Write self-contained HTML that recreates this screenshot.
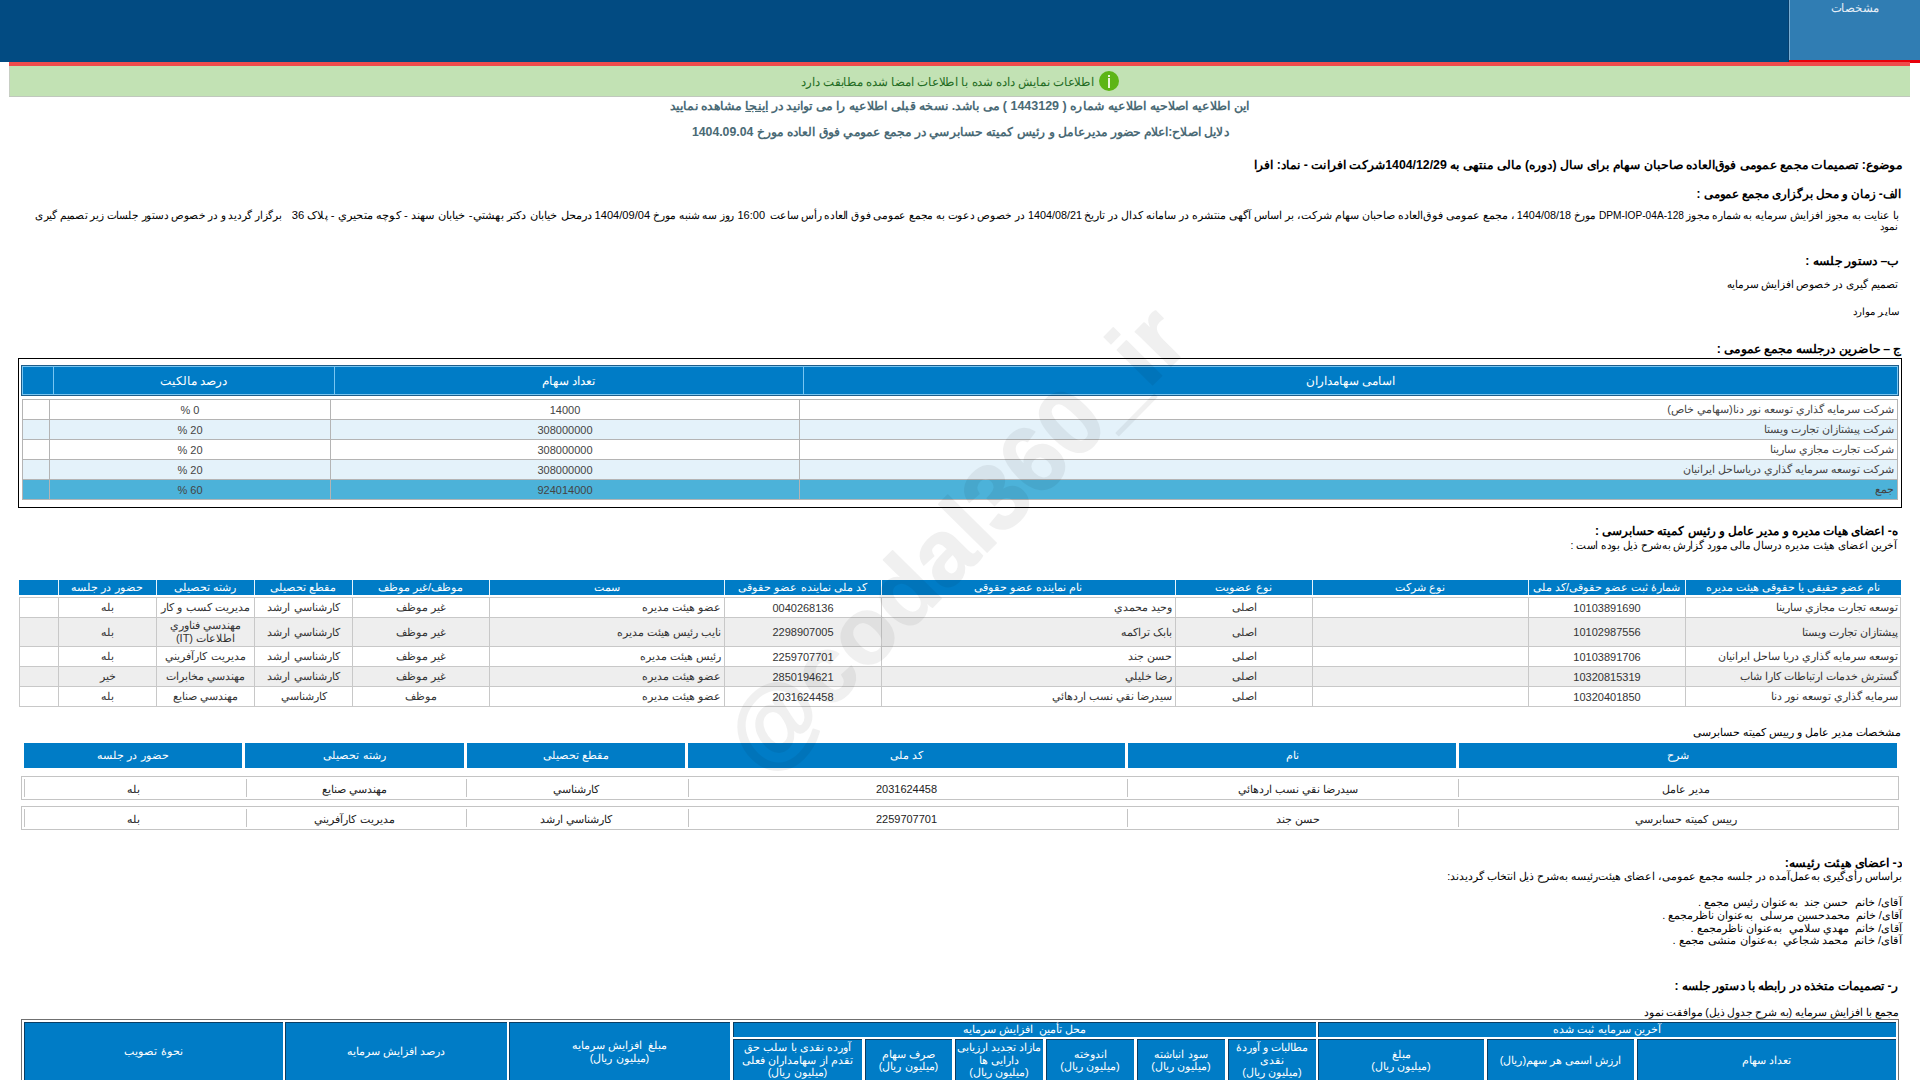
<!DOCTYPE html>
<html lang="fa" dir="rtl"><head><meta charset="utf-8"><title>codal</title>
<style>
html,body{margin:0;padding:0;background:#fff;width:1920px;height:1080px;overflow:hidden;}
body{position:relative;font-family:"Liberation Sans",sans-serif;}
body>div,body>svg{position:absolute;}
.tx{white-space:nowrap;direction:rtl;}
.mk{display:inline-block;width:0;height:0;}
.cell{display:flex;align-items:center;box-sizing:border-box;direction:rtl;white-space:nowrap;}
</style></head><body>
<div style="left:0px;top:0px;width:1920px;height:62px;background:#024b82;"></div>
<div style="left:1789px;top:0px;width:131px;height:60px;background:#307db3;"></div>
<div style="left:1788px;top:0px;width:1px;height:62px;background:#083f6c;"></div>
<div style="left:1789px;top:0px;width:1px;height:60px;background:#7aaed4;"></div>
<div style="left:1789px;top:60px;width:131px;height:3px;background:#e8000a;"></div>
<div style="left:9px;top:62px;width:1901px;height:4px;background:#ef4c4c;"></div>
<div style="left:9px;top:66px;width:1901px;height:30px;background:#c2e2b4;"></div>
<div style="left:9px;top:96px;width:1901px;height:1px;background:#c0c8bd;"></div>
<div style="left:9px;top:66px;width:1px;height:30px;background:#c8cfc4;"></div>
<div style="left:1099px;top:71px;width:20px;height:20px;border-radius:50%;background:#5db515;"></div>
<div style="left:1108px;top:75px;width:2px;height:2px;background:#e8f6d8;"></div>
<div style="left:1108px;top:78px;width:2px;height:10px;background:#e8f6d8;"></div>
<div style="left:18px;top:358px;width:1884px;height:150px;background:#000;"></div>
<div style="left:19px;top:359px;width:1882px;height:148px;background:#fff;"></div>
<div style="left:21px;top:365px;width:1878px;height:31px;background:#1f5d89;"></div>
<div style="left:22px;top:366px;width:1876px;height:29px;background:#78c6f2;"></div>
<div style="left:23px;top:367px;width:1874px;height:27px;background:#007cc6;"></div>
<div style="left:53px;top:367px;width:1px;height:27px;background:#78c6f2;"></div>
<div style="left:334px;top:367px;width:1px;height:27px;background:#78c6f2;"></div>
<div style="left:803px;top:367px;width:1px;height:27px;background:#78c6f2;"></div>
<div class="cell" style="left:803px;top:366px;width:1095px;height:29px;justify-content:center;text-align:center;color:#fff;font-size:12px;font-weight:normal;padding:0 4px;">اسامی سهامداران</div>
<div class="cell" style="left:334px;top:366px;width:469px;height:29px;justify-content:center;text-align:center;color:#fff;font-size:12px;font-weight:normal;padding:0 4px;">تعداد سهام</div>
<div class="cell" style="left:53px;top:366px;width:281px;height:29px;justify-content:center;text-align:center;color:#fff;font-size:12px;font-weight:normal;padding:0 4px;">درصد مالکیت</div>
<div style="left:22px;top:399px;width:1876px;height:101px;background:#b4b4b4;"></div>
<div style="left:23px;top:400px;width:1874px;height:19px;background:#fff;"></div>
<div style="left:49px;top:400px;width:1px;height:19px;background:#b4b4b4;"></div>
<div style="left:330px;top:400px;width:1px;height:19px;background:#b4b4b4;"></div>
<div style="left:799px;top:400px;width:1px;height:19px;background:#b4b4b4;"></div>
<div class="cell" style="left:800px;top:400px;width:1097px;height:19px;justify-content:flex-start;text-align:right;color:#444;font-size:11px;font-weight:normal;padding:0 3px;">شرکت سرمايه گذاري توسعه نور دنا(سهامي خاص)</div>
<div class="cell" style="left:331px;top:400px;width:468px;height:19px;justify-content:center;text-align:center;color:#444;font-size:11px;font-weight:normal;padding:0 4px;">14000</div>
<div class="cell" style="left:50px;top:400px;width:280px;height:19px;justify-content:center;text-align:center;color:#444;font-size:11px;font-weight:normal;padding:0 4px;">0 %</div>
<div style="left:23px;top:420px;width:1874px;height:19px;background:#e4f2fa;"></div>
<div style="left:49px;top:420px;width:1px;height:19px;background:#b4b4b4;"></div>
<div style="left:330px;top:420px;width:1px;height:19px;background:#b4b4b4;"></div>
<div style="left:799px;top:420px;width:1px;height:19px;background:#b4b4b4;"></div>
<div class="cell" style="left:800px;top:420px;width:1097px;height:19px;justify-content:flex-start;text-align:right;color:#444;font-size:11px;font-weight:normal;padding:0 3px;">شرکت پيشتازان تجارت ويستا</div>
<div class="cell" style="left:331px;top:420px;width:468px;height:19px;justify-content:center;text-align:center;color:#444;font-size:11px;font-weight:normal;padding:0 4px;">308000000</div>
<div class="cell" style="left:50px;top:420px;width:280px;height:19px;justify-content:center;text-align:center;color:#444;font-size:11px;font-weight:normal;padding:0 4px;">20 %</div>
<div style="left:23px;top:440px;width:1874px;height:19px;background:#fff;"></div>
<div style="left:49px;top:440px;width:1px;height:19px;background:#b4b4b4;"></div>
<div style="left:330px;top:440px;width:1px;height:19px;background:#b4b4b4;"></div>
<div style="left:799px;top:440px;width:1px;height:19px;background:#b4b4b4;"></div>
<div class="cell" style="left:800px;top:440px;width:1097px;height:19px;justify-content:flex-start;text-align:right;color:#444;font-size:11px;font-weight:normal;padding:0 3px;">شرکت تجارت مجازي سارينا</div>
<div class="cell" style="left:331px;top:440px;width:468px;height:19px;justify-content:center;text-align:center;color:#444;font-size:11px;font-weight:normal;padding:0 4px;">308000000</div>
<div class="cell" style="left:50px;top:440px;width:280px;height:19px;justify-content:center;text-align:center;color:#444;font-size:11px;font-weight:normal;padding:0 4px;">20 %</div>
<div style="left:23px;top:460px;width:1874px;height:19px;background:#e4f2fa;"></div>
<div style="left:49px;top:460px;width:1px;height:19px;background:#b4b4b4;"></div>
<div style="left:330px;top:460px;width:1px;height:19px;background:#b4b4b4;"></div>
<div style="left:799px;top:460px;width:1px;height:19px;background:#b4b4b4;"></div>
<div class="cell" style="left:800px;top:460px;width:1097px;height:19px;justify-content:flex-start;text-align:right;color:#444;font-size:11px;font-weight:normal;padding:0 3px;">شرکت توسعه سرمايه گذاري درياساحل ايرانيان</div>
<div class="cell" style="left:331px;top:460px;width:468px;height:19px;justify-content:center;text-align:center;color:#444;font-size:11px;font-weight:normal;padding:0 4px;">308000000</div>
<div class="cell" style="left:50px;top:460px;width:280px;height:19px;justify-content:center;text-align:center;color:#444;font-size:11px;font-weight:normal;padding:0 4px;">20 %</div>
<div style="left:23px;top:480px;width:1874px;height:19px;background:#4cb2d9;"></div>
<div style="left:49px;top:480px;width:1px;height:19px;background:#b4b4b4;"></div>
<div style="left:330px;top:480px;width:1px;height:19px;background:#b4b4b4;"></div>
<div style="left:799px;top:480px;width:1px;height:19px;background:#b4b4b4;"></div>
<div class="cell" style="left:800px;top:480px;width:1097px;height:19px;justify-content:flex-start;text-align:right;color:#444;font-size:11px;font-weight:normal;padding:0 3px;">جمع</div>
<div class="cell" style="left:331px;top:480px;width:468px;height:19px;justify-content:center;text-align:center;color:#444;font-size:11px;font-weight:normal;padding:0 4px;">924014000</div>
<div class="cell" style="left:50px;top:480px;width:280px;height:19px;justify-content:center;text-align:center;color:#444;font-size:11px;font-weight:normal;padding:0 4px;">60 %</div>
<div style="left:19px;top:580px;width:1882px;height:15px;background:#007cc6;"></div>
<div style="left:58px;top:580px;width:1px;height:15px;background:#e8f4fb;"></div>
<div style="left:156px;top:580px;width:1px;height:15px;background:#e8f4fb;"></div>
<div style="left:254px;top:580px;width:1px;height:15px;background:#e8f4fb;"></div>
<div style="left:352px;top:580px;width:1px;height:15px;background:#e8f4fb;"></div>
<div style="left:489px;top:580px;width:1px;height:15px;background:#e8f4fb;"></div>
<div style="left:724px;top:580px;width:1px;height:15px;background:#e8f4fb;"></div>
<div style="left:881px;top:580px;width:1px;height:15px;background:#e8f4fb;"></div>
<div style="left:1175px;top:580px;width:1px;height:15px;background:#e8f4fb;"></div>
<div style="left:1312px;top:580px;width:1px;height:15px;background:#e8f4fb;"></div>
<div style="left:1528px;top:580px;width:1px;height:15px;background:#e8f4fb;"></div>
<div style="left:1685px;top:580px;width:1px;height:15px;background:#e8f4fb;"></div>
<div class="cell" style="left:58px;top:580px;width:98px;height:15px;justify-content:center;text-align:center;color:#fff;font-size:11px;font-weight:normal;line-height:15px;padding:0 4px;">حضور در جلسه</div>
<div class="cell" style="left:156px;top:580px;width:98px;height:15px;justify-content:center;text-align:center;color:#fff;font-size:11px;font-weight:normal;line-height:15px;padding:0 4px;">رشته تحصیلی</div>
<div class="cell" style="left:254px;top:580px;width:98px;height:15px;justify-content:center;text-align:center;color:#fff;font-size:11px;font-weight:normal;line-height:15px;padding:0 4px;">مقطع تحصیلی</div>
<div class="cell" style="left:352px;top:580px;width:137px;height:15px;justify-content:center;text-align:center;color:#fff;font-size:11px;font-weight:normal;line-height:15px;padding:0 4px;">موظف/غیر موظف</div>
<div class="cell" style="left:489px;top:580px;width:235px;height:15px;justify-content:center;text-align:center;color:#fff;font-size:11px;font-weight:normal;line-height:15px;padding:0 4px;">سمت</div>
<div class="cell" style="left:724px;top:580px;width:157px;height:15px;justify-content:center;text-align:center;color:#fff;font-size:11px;font-weight:normal;line-height:15px;padding:0 4px;">کد ملی نماینده عضو حقوقی</div>
<div class="cell" style="left:881px;top:580px;width:294px;height:15px;justify-content:center;text-align:center;color:#fff;font-size:11px;font-weight:normal;line-height:15px;padding:0 4px;">نام نماینده عضو حقوقی</div>
<div class="cell" style="left:1175px;top:580px;width:137px;height:15px;justify-content:center;text-align:center;color:#fff;font-size:11px;font-weight:normal;line-height:15px;padding:0 4px;">نوع عضویت</div>
<div class="cell" style="left:1312px;top:580px;width:216px;height:15px;justify-content:center;text-align:center;color:#fff;font-size:11px;font-weight:normal;line-height:15px;padding:0 4px;">نوع شرکت</div>
<div class="cell" style="left:1528px;top:580px;width:157px;height:15px;justify-content:center;text-align:center;color:#fff;font-size:11px;font-weight:normal;line-height:15px;padding:0 4px;">شمارهٔ ثبت عضو حقوقی/کد ملی</div>
<div class="cell" style="left:1685px;top:580px;width:216px;height:15px;justify-content:center;text-align:center;color:#fff;font-size:11px;font-weight:normal;line-height:15px;padding:0 4px;">نام عضو حقیقی یا حقوقی هیئت مدیره</div>
<div style="left:19px;top:597px;width:1882px;height:110px;background:#c8c8c8;"></div>
<div style="left:20px;top:598px;width:1880px;height:19px;background:#fff;"></div>
<div style="left:58px;top:597px;width:1px;height:20px;background:#c8c8c8;"></div>
<div style="left:156px;top:597px;width:1px;height:20px;background:#c8c8c8;"></div>
<div style="left:254px;top:597px;width:1px;height:20px;background:#c8c8c8;"></div>
<div style="left:352px;top:597px;width:1px;height:20px;background:#c8c8c8;"></div>
<div style="left:489px;top:597px;width:1px;height:20px;background:#c8c8c8;"></div>
<div style="left:724px;top:597px;width:1px;height:20px;background:#c8c8c8;"></div>
<div style="left:881px;top:597px;width:1px;height:20px;background:#c8c8c8;"></div>
<div style="left:1175px;top:597px;width:1px;height:20px;background:#c8c8c8;"></div>
<div style="left:1312px;top:597px;width:1px;height:20px;background:#c8c8c8;"></div>
<div style="left:1528px;top:597px;width:1px;height:20px;background:#c8c8c8;"></div>
<div style="left:1685px;top:597px;width:1px;height:20px;background:#c8c8c8;"></div>
<div class="cell" style="left:59px;top:598px;width:97px;height:19px;justify-content:center;text-align:center;color:#333;font-size:11px;font-weight:normal;padding:0 3px;">بله</div>
<div class="cell" style="left:157px;top:598px;width:97px;height:19px;justify-content:center;text-align:center;color:#333;font-size:11px;font-weight:normal;padding:0 3px;">مديريت کسب و کار</div>
<div class="cell" style="left:255px;top:598px;width:97px;height:19px;justify-content:center;text-align:center;color:#333;font-size:11px;font-weight:normal;padding:0 3px;">کارشناسي ارشد</div>
<div class="cell" style="left:353px;top:598px;width:136px;height:19px;justify-content:center;text-align:center;color:#333;font-size:11px;font-weight:normal;padding:0 3px;">غير موظف</div>
<div class="cell" style="left:490px;top:598px;width:234px;height:19px;justify-content:flex-start;text-align:right;color:#333;font-size:11px;font-weight:normal;padding:0 3px;">عضو هيئت مديره</div>
<div class="cell" style="left:725px;top:598px;width:156px;height:19px;justify-content:center;text-align:center;color:#333;font-size:11px;font-weight:normal;padding:0 3px;">0040268136</div>
<div class="cell" style="left:882px;top:598px;width:293px;height:19px;justify-content:flex-start;text-align:right;color:#333;font-size:11px;font-weight:normal;padding:0 3px;">وحيد محمدي</div>
<div class="cell" style="left:1176px;top:598px;width:136px;height:19px;justify-content:center;text-align:center;color:#333;font-size:11px;font-weight:normal;padding:0 3px;">اصلی</div>
<div class="cell" style="left:1529px;top:598px;width:156px;height:19px;justify-content:center;text-align:center;color:#333;font-size:11px;font-weight:normal;padding:0 3px;">10103891690</div>
<div class="cell" style="left:1686px;top:598px;width:215px;height:19px;justify-content:flex-start;text-align:right;color:#333;font-size:11px;font-weight:normal;padding:0 3px;">توسعه تجارت مجازي سارينا</div>
<div style="left:20px;top:618px;width:1880px;height:28px;background:#eeeeee;"></div>
<div style="left:58px;top:617px;width:1px;height:29px;background:#c8c8c8;"></div>
<div style="left:156px;top:617px;width:1px;height:29px;background:#c8c8c8;"></div>
<div style="left:254px;top:617px;width:1px;height:29px;background:#c8c8c8;"></div>
<div style="left:352px;top:617px;width:1px;height:29px;background:#c8c8c8;"></div>
<div style="left:489px;top:617px;width:1px;height:29px;background:#c8c8c8;"></div>
<div style="left:724px;top:617px;width:1px;height:29px;background:#c8c8c8;"></div>
<div style="left:881px;top:617px;width:1px;height:29px;background:#c8c8c8;"></div>
<div style="left:1175px;top:617px;width:1px;height:29px;background:#c8c8c8;"></div>
<div style="left:1312px;top:617px;width:1px;height:29px;background:#c8c8c8;"></div>
<div style="left:1528px;top:617px;width:1px;height:29px;background:#c8c8c8;"></div>
<div style="left:1685px;top:617px;width:1px;height:29px;background:#c8c8c8;"></div>
<div class="cell" style="left:59px;top:618px;width:97px;height:28px;justify-content:center;text-align:center;color:#333;font-size:11px;font-weight:normal;padding:0 3px;">بله</div>
<div class="cell" style="left:157px;top:618px;width:97px;height:28px;justify-content:center;text-align:center;color:#333;font-size:11px;font-weight:normal;line-height:13px;padding:0 3px;">مهندسي فناوري<br>اطلاعات (IT)</div>
<div class="cell" style="left:255px;top:618px;width:97px;height:28px;justify-content:center;text-align:center;color:#333;font-size:11px;font-weight:normal;padding:0 3px;">کارشناسي ارشد</div>
<div class="cell" style="left:353px;top:618px;width:136px;height:28px;justify-content:center;text-align:center;color:#333;font-size:11px;font-weight:normal;padding:0 3px;">غير موظف</div>
<div class="cell" style="left:490px;top:618px;width:234px;height:28px;justify-content:flex-start;text-align:right;color:#333;font-size:11px;font-weight:normal;padding:0 3px;">نايب رئيس هيئت مديره</div>
<div class="cell" style="left:725px;top:618px;width:156px;height:28px;justify-content:center;text-align:center;color:#333;font-size:11px;font-weight:normal;padding:0 3px;">2298907005</div>
<div class="cell" style="left:882px;top:618px;width:293px;height:28px;justify-content:flex-start;text-align:right;color:#333;font-size:11px;font-weight:normal;padding:0 3px;">بابک تراکمه</div>
<div class="cell" style="left:1176px;top:618px;width:136px;height:28px;justify-content:center;text-align:center;color:#333;font-size:11px;font-weight:normal;padding:0 3px;">اصلی</div>
<div class="cell" style="left:1529px;top:618px;width:156px;height:28px;justify-content:center;text-align:center;color:#333;font-size:11px;font-weight:normal;padding:0 3px;">10102987556</div>
<div class="cell" style="left:1686px;top:618px;width:215px;height:28px;justify-content:flex-start;text-align:right;color:#333;font-size:11px;font-weight:normal;padding:0 3px;">پيشتازان تجارت ويستا</div>
<div style="left:20px;top:647px;width:1880px;height:19px;background:#fff;"></div>
<div style="left:58px;top:646px;width:1px;height:20px;background:#c8c8c8;"></div>
<div style="left:156px;top:646px;width:1px;height:20px;background:#c8c8c8;"></div>
<div style="left:254px;top:646px;width:1px;height:20px;background:#c8c8c8;"></div>
<div style="left:352px;top:646px;width:1px;height:20px;background:#c8c8c8;"></div>
<div style="left:489px;top:646px;width:1px;height:20px;background:#c8c8c8;"></div>
<div style="left:724px;top:646px;width:1px;height:20px;background:#c8c8c8;"></div>
<div style="left:881px;top:646px;width:1px;height:20px;background:#c8c8c8;"></div>
<div style="left:1175px;top:646px;width:1px;height:20px;background:#c8c8c8;"></div>
<div style="left:1312px;top:646px;width:1px;height:20px;background:#c8c8c8;"></div>
<div style="left:1528px;top:646px;width:1px;height:20px;background:#c8c8c8;"></div>
<div style="left:1685px;top:646px;width:1px;height:20px;background:#c8c8c8;"></div>
<div class="cell" style="left:59px;top:647px;width:97px;height:19px;justify-content:center;text-align:center;color:#333;font-size:11px;font-weight:normal;padding:0 3px;">بله</div>
<div class="cell" style="left:157px;top:647px;width:97px;height:19px;justify-content:center;text-align:center;color:#333;font-size:11px;font-weight:normal;padding:0 3px;">مديريت کارآفريني</div>
<div class="cell" style="left:255px;top:647px;width:97px;height:19px;justify-content:center;text-align:center;color:#333;font-size:11px;font-weight:normal;padding:0 3px;">کارشناسي ارشد</div>
<div class="cell" style="left:353px;top:647px;width:136px;height:19px;justify-content:center;text-align:center;color:#333;font-size:11px;font-weight:normal;padding:0 3px;">غير موظف</div>
<div class="cell" style="left:490px;top:647px;width:234px;height:19px;justify-content:flex-start;text-align:right;color:#333;font-size:11px;font-weight:normal;padding:0 3px;">رئيس هيئت مديره</div>
<div class="cell" style="left:725px;top:647px;width:156px;height:19px;justify-content:center;text-align:center;color:#333;font-size:11px;font-weight:normal;padding:0 3px;">2259707701</div>
<div class="cell" style="left:882px;top:647px;width:293px;height:19px;justify-content:flex-start;text-align:right;color:#333;font-size:11px;font-weight:normal;padding:0 3px;">حسن جند</div>
<div class="cell" style="left:1176px;top:647px;width:136px;height:19px;justify-content:center;text-align:center;color:#333;font-size:11px;font-weight:normal;padding:0 3px;">اصلی</div>
<div class="cell" style="left:1529px;top:647px;width:156px;height:19px;justify-content:center;text-align:center;color:#333;font-size:11px;font-weight:normal;padding:0 3px;">10103891706</div>
<div class="cell" style="left:1686px;top:647px;width:215px;height:19px;justify-content:flex-start;text-align:right;color:#333;font-size:11px;font-weight:normal;padding:0 3px;">توسعه سرمايه گذاري دريا ساحل ايرانيان</div>
<div style="left:20px;top:667px;width:1880px;height:19px;background:#eeeeee;"></div>
<div style="left:58px;top:666px;width:1px;height:20px;background:#c8c8c8;"></div>
<div style="left:156px;top:666px;width:1px;height:20px;background:#c8c8c8;"></div>
<div style="left:254px;top:666px;width:1px;height:20px;background:#c8c8c8;"></div>
<div style="left:352px;top:666px;width:1px;height:20px;background:#c8c8c8;"></div>
<div style="left:489px;top:666px;width:1px;height:20px;background:#c8c8c8;"></div>
<div style="left:724px;top:666px;width:1px;height:20px;background:#c8c8c8;"></div>
<div style="left:881px;top:666px;width:1px;height:20px;background:#c8c8c8;"></div>
<div style="left:1175px;top:666px;width:1px;height:20px;background:#c8c8c8;"></div>
<div style="left:1312px;top:666px;width:1px;height:20px;background:#c8c8c8;"></div>
<div style="left:1528px;top:666px;width:1px;height:20px;background:#c8c8c8;"></div>
<div style="left:1685px;top:666px;width:1px;height:20px;background:#c8c8c8;"></div>
<div class="cell" style="left:59px;top:667px;width:97px;height:19px;justify-content:center;text-align:center;color:#333;font-size:11px;font-weight:normal;padding:0 3px;">خير</div>
<div class="cell" style="left:157px;top:667px;width:97px;height:19px;justify-content:center;text-align:center;color:#333;font-size:11px;font-weight:normal;padding:0 3px;">مهندسي مخابرات</div>
<div class="cell" style="left:255px;top:667px;width:97px;height:19px;justify-content:center;text-align:center;color:#333;font-size:11px;font-weight:normal;padding:0 3px;">کارشناسي ارشد</div>
<div class="cell" style="left:353px;top:667px;width:136px;height:19px;justify-content:center;text-align:center;color:#333;font-size:11px;font-weight:normal;padding:0 3px;">غير موظف</div>
<div class="cell" style="left:490px;top:667px;width:234px;height:19px;justify-content:flex-start;text-align:right;color:#333;font-size:11px;font-weight:normal;padding:0 3px;">عضو هيئت مديره</div>
<div class="cell" style="left:725px;top:667px;width:156px;height:19px;justify-content:center;text-align:center;color:#333;font-size:11px;font-weight:normal;padding:0 3px;">2850194621</div>
<div class="cell" style="left:882px;top:667px;width:293px;height:19px;justify-content:flex-start;text-align:right;color:#333;font-size:11px;font-weight:normal;padding:0 3px;">رضا خليلي</div>
<div class="cell" style="left:1176px;top:667px;width:136px;height:19px;justify-content:center;text-align:center;color:#333;font-size:11px;font-weight:normal;padding:0 3px;">اصلی</div>
<div class="cell" style="left:1529px;top:667px;width:156px;height:19px;justify-content:center;text-align:center;color:#333;font-size:11px;font-weight:normal;padding:0 3px;">10320815319</div>
<div class="cell" style="left:1686px;top:667px;width:215px;height:19px;justify-content:flex-start;text-align:right;color:#333;font-size:11px;font-weight:normal;padding:0 3px;">گسترش خدمات ارتباطات کارا شاب</div>
<div style="left:20px;top:687px;width:1880px;height:19px;background:#fff;"></div>
<div style="left:58px;top:686px;width:1px;height:20px;background:#c8c8c8;"></div>
<div style="left:156px;top:686px;width:1px;height:20px;background:#c8c8c8;"></div>
<div style="left:254px;top:686px;width:1px;height:20px;background:#c8c8c8;"></div>
<div style="left:352px;top:686px;width:1px;height:20px;background:#c8c8c8;"></div>
<div style="left:489px;top:686px;width:1px;height:20px;background:#c8c8c8;"></div>
<div style="left:724px;top:686px;width:1px;height:20px;background:#c8c8c8;"></div>
<div style="left:881px;top:686px;width:1px;height:20px;background:#c8c8c8;"></div>
<div style="left:1175px;top:686px;width:1px;height:20px;background:#c8c8c8;"></div>
<div style="left:1312px;top:686px;width:1px;height:20px;background:#c8c8c8;"></div>
<div style="left:1528px;top:686px;width:1px;height:20px;background:#c8c8c8;"></div>
<div style="left:1685px;top:686px;width:1px;height:20px;background:#c8c8c8;"></div>
<div class="cell" style="left:59px;top:687px;width:97px;height:19px;justify-content:center;text-align:center;color:#333;font-size:11px;font-weight:normal;padding:0 3px;">بله</div>
<div class="cell" style="left:157px;top:687px;width:97px;height:19px;justify-content:center;text-align:center;color:#333;font-size:11px;font-weight:normal;padding:0 3px;">مهندسي صنايع</div>
<div class="cell" style="left:255px;top:687px;width:97px;height:19px;justify-content:center;text-align:center;color:#333;font-size:11px;font-weight:normal;padding:0 3px;">کارشناسي</div>
<div class="cell" style="left:353px;top:687px;width:136px;height:19px;justify-content:center;text-align:center;color:#333;font-size:11px;font-weight:normal;padding:0 3px;">موظف</div>
<div class="cell" style="left:490px;top:687px;width:234px;height:19px;justify-content:flex-start;text-align:right;color:#333;font-size:11px;font-weight:normal;padding:0 3px;">عضو هيئت مديره</div>
<div class="cell" style="left:725px;top:687px;width:156px;height:19px;justify-content:center;text-align:center;color:#333;font-size:11px;font-weight:normal;padding:0 3px;">2031624458</div>
<div class="cell" style="left:882px;top:687px;width:293px;height:19px;justify-content:flex-start;text-align:right;color:#333;font-size:11px;font-weight:normal;padding:0 3px;">سيدرضا نقي نسب اردهائي</div>
<div class="cell" style="left:1176px;top:687px;width:136px;height:19px;justify-content:center;text-align:center;color:#333;font-size:11px;font-weight:normal;padding:0 3px;">اصلی</div>
<div class="cell" style="left:1529px;top:687px;width:156px;height:19px;justify-content:center;text-align:center;color:#333;font-size:11px;font-weight:normal;padding:0 3px;">10320401850</div>
<div class="cell" style="left:1686px;top:687px;width:215px;height:19px;justify-content:flex-start;text-align:right;color:#333;font-size:11px;font-weight:normal;padding:0 3px;">سرمايه گذاري توسعه نور دنا</div>
<div style="left:24px;top:743px;width:218px;height:25px;background:#007cc6;"></div>
<div class="cell" style="left:24px;top:743px;width:218px;height:25px;justify-content:center;text-align:center;color:#fff;font-size:11px;font-weight:normal;padding:0 4px;">حضور در جلسه</div>
<div style="left:245px;top:743px;width:219px;height:25px;background:#007cc6;"></div>
<div class="cell" style="left:245px;top:743px;width:219px;height:25px;justify-content:center;text-align:center;color:#fff;font-size:11px;font-weight:normal;padding:0 4px;">رشته تحصیلی</div>
<div style="left:467px;top:743px;width:218px;height:25px;background:#007cc6;"></div>
<div class="cell" style="left:467px;top:743px;width:218px;height:25px;justify-content:center;text-align:center;color:#fff;font-size:11px;font-weight:normal;padding:0 4px;">مقطع تحصیلی</div>
<div style="left:688px;top:743px;width:437px;height:25px;background:#007cc6;"></div>
<div class="cell" style="left:688px;top:743px;width:437px;height:25px;justify-content:center;text-align:center;color:#fff;font-size:11px;font-weight:normal;padding:0 4px;">کد ملی</div>
<div style="left:1128px;top:743px;width:328px;height:25px;background:#007cc6;"></div>
<div class="cell" style="left:1128px;top:743px;width:328px;height:25px;justify-content:center;text-align:center;color:#fff;font-size:11px;font-weight:normal;padding:0 4px;">نام</div>
<div style="left:1459px;top:743px;width:438px;height:25px;background:#007cc6;"></div>
<div class="cell" style="left:1459px;top:743px;width:438px;height:25px;justify-content:center;text-align:center;color:#fff;font-size:11px;font-weight:normal;padding:0 4px;">شرح</div>
<div style="left:21px;top:776px;width:1878px;height:24px;background:#c4c4c4;"></div>
<div style="left:22px;top:777px;width:1876px;height:22px;background:#fff;"></div>
<div style="left:24px;top:779px;width:1px;height:18px;background:#c4c4c4;"></div>
<div style="left:246px;top:779px;width:1px;height:18px;background:#c4c4c4;"></div>
<div style="left:466px;top:779px;width:1px;height:18px;background:#c4c4c4;"></div>
<div style="left:688px;top:779px;width:1px;height:18px;background:#c4c4c4;"></div>
<div style="left:1127px;top:779px;width:1px;height:18px;background:#c4c4c4;"></div>
<div style="left:1458px;top:779px;width:1px;height:18px;background:#c4c4c4;"></div>
<div class="cell" style="left:24px;top:778px;width:218px;height:22px;justify-content:center;text-align:center;color:#222;font-size:11px;font-weight:normal;padding:0 4px;">بله</div>
<div class="cell" style="left:245px;top:778px;width:219px;height:22px;justify-content:center;text-align:center;color:#222;font-size:11px;font-weight:normal;padding:0 4px;">مهندسي صنايع</div>
<div class="cell" style="left:467px;top:778px;width:218px;height:22px;justify-content:center;text-align:center;color:#222;font-size:11px;font-weight:normal;padding:0 4px;">کارشناسي</div>
<div class="cell" style="left:688px;top:778px;width:437px;height:22px;justify-content:center;text-align:center;color:#222;font-size:11px;font-weight:normal;padding:0 4px;">2031624458</div>
<div class="cell" style="left:1134px;top:778px;width:328px;height:22px;justify-content:center;text-align:center;color:#222;font-size:11px;font-weight:normal;padding:0 4px;">سيدرضا نقي نسب اردهائي</div>
<div class="cell" style="left:1467px;top:778px;width:438px;height:22px;justify-content:center;text-align:center;color:#222;font-size:11px;font-weight:normal;padding:0 4px;">مدير عامل</div>
<div style="left:21px;top:806px;width:1878px;height:24px;background:#c4c4c4;"></div>
<div style="left:22px;top:807px;width:1876px;height:22px;background:#fff;"></div>
<div style="left:24px;top:809px;width:1px;height:18px;background:#c4c4c4;"></div>
<div style="left:246px;top:809px;width:1px;height:18px;background:#c4c4c4;"></div>
<div style="left:466px;top:809px;width:1px;height:18px;background:#c4c4c4;"></div>
<div style="left:688px;top:809px;width:1px;height:18px;background:#c4c4c4;"></div>
<div style="left:1127px;top:809px;width:1px;height:18px;background:#c4c4c4;"></div>
<div style="left:1458px;top:809px;width:1px;height:18px;background:#c4c4c4;"></div>
<div class="cell" style="left:24px;top:808px;width:218px;height:22px;justify-content:center;text-align:center;color:#222;font-size:11px;font-weight:normal;padding:0 4px;">بله</div>
<div class="cell" style="left:245px;top:808px;width:219px;height:22px;justify-content:center;text-align:center;color:#222;font-size:11px;font-weight:normal;padding:0 4px;">مديريت کارآفريني</div>
<div class="cell" style="left:467px;top:808px;width:218px;height:22px;justify-content:center;text-align:center;color:#222;font-size:11px;font-weight:normal;padding:0 4px;">کارشناسي ارشد</div>
<div class="cell" style="left:688px;top:808px;width:437px;height:22px;justify-content:center;text-align:center;color:#222;font-size:11px;font-weight:normal;padding:0 4px;">2259707701</div>
<div class="cell" style="left:1134px;top:808px;width:328px;height:22px;justify-content:center;text-align:center;color:#222;font-size:11px;font-weight:normal;padding:0 4px;">حسن جند</div>
<div class="cell" style="left:1467px;top:808px;width:438px;height:22px;justify-content:center;text-align:center;color:#222;font-size:11px;font-weight:normal;padding:0 4px;">رييس کميته حسابرسي</div>
<div style="left:21px;top:1019px;width:1878px;height:61px;background:#707070;"></div>
<div style="left:22px;top:1020px;width:1876px;height:60px;background:#fff;"></div>
<div style="left:24px;top:1022px;width:259px;height:59px;background:#0a3d63;"></div>
<div style="left:25px;top:1023px;width:258px;height:58px;background:#007cc6;"></div>
<div class="cell" style="left:24px;top:1022px;width:259px;height:59px;justify-content:center;text-align:center;color:#fff;font-size:11px;font-weight:normal;line-height:12.5px;padding:0 4px;">نحوهٔ تصویب</div>
<div style="left:285px;top:1022px;width:222px;height:59px;background:#0a3d63;"></div>
<div style="left:286px;top:1023px;width:221px;height:58px;background:#007cc6;"></div>
<div class="cell" style="left:285px;top:1022px;width:222px;height:59px;justify-content:center;text-align:center;color:#fff;font-size:11px;font-weight:normal;line-height:12.5px;padding:0 4px;">درصد افزایش سرمایه</div>
<div style="left:509px;top:1022px;width:221px;height:59px;background:#0a3d63;"></div>
<div style="left:510px;top:1023px;width:220px;height:58px;background:#007cc6;"></div>
<div class="cell" style="left:509px;top:1022px;width:221px;height:59px;justify-content:center;text-align:center;color:#fff;font-size:11px;font-weight:normal;line-height:12.5px;padding:0 4px;">مبلغ&nbsp; افزایش سرمایه<br>(میلیون ریال)</div>
<div style="left:733px;top:1022px;width:583px;height:15px;background:#0a3d63;"></div>
<div style="left:734px;top:1023px;width:582px;height:14px;background:#007cc6;"></div>
<div class="cell" style="left:733px;top:1022px;width:583px;height:15px;justify-content:center;text-align:center;color:#fff;font-size:11px;font-weight:normal;line-height:12.5px;padding:0 4px;">محل تأمین&nbsp; افزایش سرمایه</div>
<div style="left:1318px;top:1022px;width:578px;height:15px;background:#0a3d63;"></div>
<div style="left:1319px;top:1023px;width:577px;height:14px;background:#007cc6;"></div>
<div class="cell" style="left:1318px;top:1022px;width:578px;height:15px;justify-content:center;text-align:center;color:#fff;font-size:11px;font-weight:normal;line-height:12.5px;padding:0 4px;">آخرین سرمایه ثبت شده</div>
<div style="left:733px;top:1039px;width:129px;height:42px;background:#0a3d63;"></div>
<div style="left:734px;top:1040px;width:128px;height:41px;background:#007cc6;"></div>
<div class="cell" style="left:733px;top:1039px;width:129px;height:42px;justify-content:center;text-align:center;color:#fff;font-size:11px;font-weight:normal;line-height:12.5px;padding:0 4px;">آورده نقدی با سلب حق<br>تقدم از سهامداران فعلی<br>(میلیون ریال)</div>
<div style="left:865px;top:1039px;width:87px;height:42px;background:#0a3d63;"></div>
<div style="left:866px;top:1040px;width:86px;height:41px;background:#007cc6;"></div>
<div class="cell" style="left:865px;top:1039px;width:87px;height:42px;justify-content:center;text-align:center;color:#fff;font-size:11px;font-weight:normal;line-height:12.5px;padding:0 4px;">صرف سهام<br>(میلیون ریال)</div>
<div style="left:955px;top:1039px;width:88px;height:42px;background:#0a3d63;"></div>
<div style="left:956px;top:1040px;width:87px;height:41px;background:#007cc6;"></div>
<div class="cell" style="left:955px;top:1039px;width:88px;height:42px;justify-content:center;text-align:center;color:#fff;font-size:11px;font-weight:normal;line-height:12.5px;padding:0 4px;">مازاد تجدید ارزیابی<br>دارایی ها<br>(میلیون ریال)</div>
<div style="left:1046px;top:1039px;width:88px;height:42px;background:#0a3d63;"></div>
<div style="left:1047px;top:1040px;width:87px;height:41px;background:#007cc6;"></div>
<div class="cell" style="left:1046px;top:1039px;width:88px;height:42px;justify-content:center;text-align:center;color:#fff;font-size:11px;font-weight:normal;line-height:12.5px;padding:0 4px;">اندوخته<br>(میلیون ریال)</div>
<div style="left:1137px;top:1039px;width:88px;height:42px;background:#0a3d63;"></div>
<div style="left:1138px;top:1040px;width:87px;height:41px;background:#007cc6;"></div>
<div class="cell" style="left:1137px;top:1039px;width:88px;height:42px;justify-content:center;text-align:center;color:#fff;font-size:11px;font-weight:normal;line-height:12.5px;padding:0 4px;">سود انباشته<br>(میلیون ریال)</div>
<div style="left:1228px;top:1039px;width:88px;height:42px;background:#0a3d63;"></div>
<div style="left:1229px;top:1040px;width:87px;height:41px;background:#007cc6;"></div>
<div class="cell" style="left:1228px;top:1039px;width:88px;height:42px;justify-content:center;text-align:center;color:#fff;font-size:11px;font-weight:normal;line-height:12.5px;padding:0 4px;">مطالبات و آوردهٔ<br>نقدی<br>(میلیون ریال)</div>
<div style="left:1318px;top:1039px;width:166px;height:42px;background:#0a3d63;"></div>
<div style="left:1319px;top:1040px;width:165px;height:41px;background:#007cc6;"></div>
<div class="cell" style="left:1318px;top:1039px;width:166px;height:42px;justify-content:center;text-align:center;color:#fff;font-size:11px;font-weight:normal;line-height:12.5px;padding:0 4px;">مبلغ<br>(میلیون ریال)</div>
<div style="left:1487px;top:1039px;width:147px;height:42px;background:#0a3d63;"></div>
<div style="left:1488px;top:1040px;width:146px;height:41px;background:#007cc6;"></div>
<div class="cell" style="left:1487px;top:1039px;width:147px;height:42px;justify-content:center;text-align:center;color:#fff;font-size:11px;font-weight:normal;line-height:12.5px;padding:0 4px;">ارزش اسمی هر سهم(ریال)</div>
<div style="left:1637px;top:1039px;width:259px;height:42px;background:#0a3d63;"></div>
<div style="left:1638px;top:1040px;width:258px;height:41px;background:#007cc6;"></div>
<div class="cell" style="left:1637px;top:1039px;width:259px;height:42px;justify-content:center;text-align:center;color:#fff;font-size:11px;font-weight:normal;line-height:12.5px;padding:0 4px;">تعداد سهام</div>
<div id="tab" class="tx" style="right:41.00px;top:-1.66px;font-size:12.000px;line-height:20px;font-weight:normal;color:#e6eef6;transform:scaleX(0.9700);transform-origin:100% 50%;">مشخصات<span class="mk"></span></div>
<div id="green" class="tx" style="right:826.00px;top:71.84px;font-size:12.000px;line-height:20px;font-weight:normal;color:#226b22;transform:scaleX(0.9799);transform-origin:100% 50%;">اطلاعات نمایش داده شده با اطلاعات امضا شده مطابقت دارد<span class="mk"></span></div>
<div id="t3" class="tx" style="right:670.40px;top:95.84px;font-size:12.000px;line-height:20px;font-weight:bold;color:#4a6a75;transform:scaleX(1.0402);transform-origin:100% 50%;">این اطلاعیه اصلاحیه اطلاعیه شماره ( 1443129 ) می باشد. نسخه قبلی اطلاعیه را می توانید در <u>اینجا</u> مشاهده نمایید<span class="mk"></span></div>
<div id="t4" class="tx" style="right:691.50px;top:121.84px;font-size:12.000px;line-height:20px;font-weight:bold;color:#4a6a75;transform:scaleX(1.0210);transform-origin:100% 50%;">دلایل اصلاح:اعلام حضور مدیرعامل و رئیس کمیته حسابرسي در مجمع عمومي فوق العاده مورخ 1404.09.04<span class="mk"></span></div>
<div id="t5" class="tx" style="right:18.30px;top:154.59px;font-size:12.000px;line-height:20px;font-weight:bold;color:#000;transform:scaleX(1.0240);transform-origin:100% 50%;">موضوع: تصمیمات مجمع عمومی فوق‌العاده صاحبان سهام برای سال (دوره) مالی منتهی به 1404/12/29شرکت افرانت - نماد: افرا<span class="mk"></span></div>
<div id="t6" class="tx" style="right:19.00px;top:184.14px;font-size:12.000px;line-height:20px;font-weight:bold;color:#000;transform:scaleX(0.9828);transform-origin:100% 50%;">الف- زمان و محل برگزاری مجمع عمومی :<span class="mk"></span></div>
<div id="t7_0" class="tx" style="right:21.70px;top:205.19px;font-size:11.000px;line-height:20px;font-weight:normal;color:#000;transform:scaleX(0.9674);transform-origin:100% 50%;">با عنایت به مجوز افزایش سرمایه به شماره مجوز<span class="mk"></span></div>
<div id="t7_1" class="tx" style="right:236.25px;top:205.53px;font-size:10.000px;line-height:20px;font-weight:normal;color:#000;transform:scaleX(1.0128);transform-origin:100% 50%;">DPM-IOP-04A-128<span class="mk"></span></div>
<div id="t7_2" class="tx" style="right:323.75px;top:205.19px;font-size:11.000px;line-height:20px;font-weight:normal;color:#000;transform:scaleX(0.9375);transform-origin:100% 50%;">مورخ<span class="mk"></span></div>
<div id="t7_3" class="tx" style="right:348.75px;top:205.19px;font-size:11.000px;line-height:20px;font-weight:normal;color:#000;transform:scaleX(0.9852);transform-origin:100% 50%;">1404/08/18<span class="mk"></span></div>
<div id="t7_4" class="tx" style="right:405.00px;top:205.19px;font-size:11.000px;line-height:20px;font-weight:normal;color:#000;transform:scaleX(0.9975);transform-origin:100% 50%;">، مجمع عمومی فوق‌العاده صاحبان سهام شرکت، بر اساس آگهی منتشره در سامانه کدال در تاریخ<span class="mk"></span></div>
<div id="t7_5" class="tx" style="right:838.00px;top:205.19px;font-size:11.000px;line-height:20px;font-weight:normal;color:#000;transform:scaleX(0.9807);transform-origin:100% 50%;">1404/08/21<span class="mk"></span></div>
<div id="t7_6" class="tx" style="right:895.00px;top:205.19px;font-size:11.000px;line-height:20px;font-weight:normal;color:#000;transform:scaleX(0.9604);transform-origin:100% 50%;">در خصوص دعوت به مجمع عمومی فوق العاده رأس ساعت<span class="mk"></span></div>
<div id="t7_7" class="tx" style="right:1155.00px;top:205.19px;font-size:11.000px;line-height:20px;font-weight:normal;color:#000;">16:00<span class="mk"></span></div>
<div id="t7_8" class="tx" style="right:1186.25px;top:205.19px;font-size:11.000px;line-height:20px;font-weight:normal;color:#000;transform:scaleX(0.9653);transform-origin:100% 50%;">روز سه شنبه مورخ<span class="mk"></span></div>
<div id="t7_9" class="tx" style="right:1270.00px;top:205.19px;font-size:11.000px;line-height:20px;font-weight:normal;color:#000;transform:scaleX(1.0079);transform-origin:100% 50%;">1404/09/04<span class="mk"></span></div>
<div id="t7_10" class="tx" style="right:1327.50px;top:205.19px;font-size:11.000px;line-height:20px;font-weight:normal;color:#000;transform:scaleX(1.0323);transform-origin:100% 50%;">درمحل خیابان دکتر بهشتي- خیابان سهند - کوچه متحیري - پلاک<span class="mk"></span></div>
<div id="t7_11" class="tx" style="right:1616.25px;top:205.19px;font-size:11.000px;line-height:20px;font-weight:normal;color:#000;transform:scaleX(1.0204);transform-origin:100% 50%;">36<span class="mk"></span></div>
<div id="t7_12" class="tx" style="right:1638.75px;top:205.19px;font-size:11.000px;line-height:20px;font-weight:normal;color:#000;transform:scaleX(0.9489);transform-origin:100% 50%;">برگزار گردید و در خصوص دستور جلسات زیر تصمیم گیری<span class="mk"></span></div>
<div id="t8" class="tx" style="right:21.70px;top:217.34px;font-size:10.000px;line-height:20px;font-weight:normal;color:#000;transform:scaleX(1.0167);transform-origin:100% 50%;">نمود<span class="mk"></span></div>
<div id="t9" class="tx" style="right:21.70px;top:250.84px;font-size:12.000px;line-height:20px;font-weight:bold;color:#000;transform:scaleX(1.0290);transform-origin:100% 50%;">ب– دستور جلسه :<span class="mk"></span></div>
<div id="t10" class="tx" style="right:21.70px;top:274.49px;font-size:11.000px;line-height:20px;font-weight:normal;color:#000;transform:scaleX(0.9518);transform-origin:100% 50%;">تصمیم گیری در خصوص افزایش سرمایه<span class="mk"></span></div>
<div id="t11" class="tx" style="right:21.70px;top:302.24px;font-size:10.000px;line-height:20px;font-weight:normal;color:#000;transform:scaleX(1.0183);transform-origin:100% 50%;">سایر موارد<span class="mk"></span></div>
<div id="t12" class="tx" style="right:18.30px;top:339.14px;font-size:12.000px;line-height:20px;font-weight:bold;color:#000;transform:scaleX(1.0239);transform-origin:100% 50%;">ج – حاضرین درجلسه مجمع عمومی :<span class="mk"></span></div>
<div id="t13" class="tx" style="right:22.50px;top:521.44px;font-size:12.000px;line-height:20px;font-weight:bold;color:#000;transform:scaleX(0.9971);transform-origin:100% 50%;">ه- اعضای هیات مدیره و مدیر عامل و رئیس کمیته حسابرسی :<span class="mk"></span></div>
<div id="t14" class="tx" style="right:23.40px;top:534.94px;font-size:11.000px;line-height:20px;font-weight:normal;color:#000;transform:scaleX(0.9493);transform-origin:100% 50%;">آخرین اعضای هیئت مدیره درسال مالی مورد گزارش به‌شرح ذیل بوده است :<span class="mk"></span></div>
<div id="t15" class="tx" style="right:18.30px;top:721.69px;font-size:11.000px;line-height:20px;font-weight:normal;color:#000;transform:scaleX(0.9955);transform-origin:100% 50%;">مشخصات مدیر عامل و رییس کمیته حسابرسی<span class="mk"></span></div>
<div id="t16" class="tx" style="right:18.20px;top:852.74px;font-size:12.000px;line-height:20px;font-weight:bold;color:#000;transform:scaleX(1.0464);transform-origin:100% 50%;">د- اعضای هیئت رئیسه:<span class="mk"></span></div>
<div id="t17" class="tx" style="right:18.20px;top:866.19px;font-size:11.000px;line-height:20px;font-weight:normal;color:#000;transform:scaleX(0.9886);transform-origin:100% 50%;">براساس رأی‌گیری به‌عمل‌آمده در جلسه مجمع عمومی، اعضای هیئت‌رئیسه به‌شرح ذیل انتخاب گردیدند:<span class="mk"></span></div>
<div id="t18" class="tx" style="right:18.20px;top:892.19px;font-size:11.000px;line-height:20px;font-weight:normal;color:#000;transform:scaleX(1.0153);transform-origin:100% 50%;">آقای/ خانم&nbsp; حسن جند&nbsp; به‌عنوان رئیس مجمع .<span class="mk"></span></div>
<div id="t19" class="tx" style="right:18.20px;top:905.19px;font-size:11.000px;line-height:20px;font-weight:normal;color:#000;">آقای/ خانم&nbsp; محمدحسین مرسلی&nbsp; به‌عنوان ناظرمجمع .<span class="mk"></span></div>
<div id="t20" class="tx" style="right:18.20px;top:918.19px;font-size:11.000px;line-height:20px;font-weight:normal;color:#000;transform:scaleX(1.0069);transform-origin:100% 50%;">آقای/ خانم&nbsp; مهدي سلامي&nbsp; به‌عنوان ناظرمجمع .<span class="mk"></span></div>
<div id="t21" class="tx" style="right:18.20px;top:930.49px;font-size:11.000px;line-height:20px;font-weight:normal;color:#000;transform:scaleX(1.0295);transform-origin:100% 50%;">آقای/ خانم&nbsp; محمد شجاعي&nbsp; به‌عنوان منشی مجمع .<span class="mk"></span></div>
<div id="t22" class="tx" style="right:22.00px;top:976.14px;font-size:12.000px;line-height:20px;font-weight:bold;color:#000;transform:scaleX(1.0073);transform-origin:100% 50%;">ر- تصمیمات متخذه در رابطه با دستور جلسه :<span class="mk"></span></div>
<div id="t23" class="tx" style="right:21.10px;top:1002.29px;font-size:11.000px;line-height:20px;font-weight:normal;color:#000;transform:scaleX(0.9690);transform-origin:100% 50%;">مجمع با افزایش سرمایه (به شرح جدول ذیل) موافقت نمود<span class="mk"></span></div>
<svg style="left:0;top:0;opacity:0.055" width="1920" height="1080" viewBox="0 0 1920 1080"><text x="954.8" y="538.5" transform="rotate(-45.3 954.8 538.5)" text-anchor="middle" dominant-baseline="central" font-family="Liberation Sans" font-weight="bold" font-size="94" fill="#000" stroke="#000" stroke-width="1.5" stroke-linejoin="round" direction="ltr">@codal360_ir</text></svg>
</body></html>
